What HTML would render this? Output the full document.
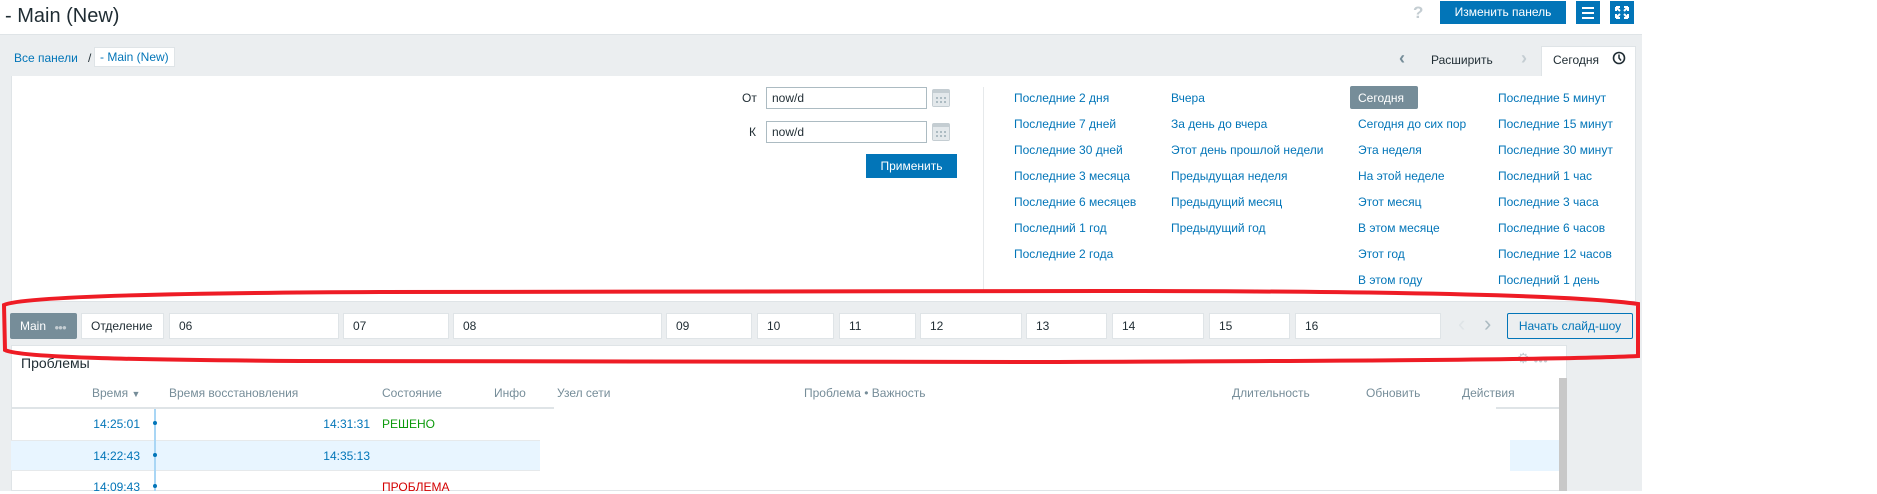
<!DOCTYPE html>
<html><head><meta charset="utf-8"><style>
*{margin:0;padding:0;box-sizing:border-box}
body{width:1877px;height:491px;overflow:hidden;background:#fff;font-family:"Liberation Sans",Arial,sans-serif;font-size:12px;color:#1f2c33;position:relative}
.a{position:absolute;white-space:nowrap}
.l{color:#0275b8}
.tab{position:absolute;top:313px;height:26px;background:#fff;border:1px solid #dfe4e7;line-height:24px;padding-left:9px;color:#1f2c33;overflow:hidden}
.h{color:#768d99}
</style></head><body>
<div class="a" style="left:5px;top:3px;font-size:20px;line-height:26px;color:#1f2c33">- Main (New)</div>
<div class="a" style="left:1413px;top:3px;font-size:17px;color:#c4cdd2;font-weight:bold">?</div>
<div class="a" style="left:1440px;top:1px;width:126px;height:23px;background:#0275b8;color:#fff;text-align:center;line-height:23px">Изменить панель</div>
<div class="a" style="left:1576px;top:1px;width:24px;height:23px;background:#0275b8">
<div style="position:absolute;left:6px;top:6px;width:12px;height:2px;background:#fff"></div>
<div style="position:absolute;left:6px;top:11px;width:12px;height:2px;background:#fff"></div>
<div style="position:absolute;left:6px;top:16px;width:12px;height:2px;background:#fff"></div></div>
<div class="a" style="left:1610px;top:1px;width:24px;height:23px;background:#0275b8">
<svg width="24" height="23" viewBox="0 0 24 23"><path d="M6 6h4M6 6v4M18 6h-4M18 6v4M6 17h4M6 17v-4M18 17h-4M18 17v-4M7 7l3 3M17 7l-3 3M7 16l3-3M17 16l-3-3" stroke="#fff" stroke-width="2" fill="none"/></svg></div>
<div class="a" style="left:0;top:34px;width:1642px;height:457px;background:#ebeef0;border-top:1px solid #dfe4e7"></div>
<div class="a l" style="left:14px;top:50px;line-height:16px">Все панели</div>
<div class="a" style="left:88px;top:50px;line-height:16px;color:#1f2c33">/</div>
<div class="a l" style="left:94px;top:47px;width:81px;height:20px;background:#fff;border:1px solid #dfe4e7;line-height:18px;padding-left:5px">- Main (New)</div>
<div class="a" style="left:1399px;top:48px;font-size:18px;color:#768d99;font-weight:bold">&#8249;</div>
<div class="a" style="left:1431px;top:53px;color:#1f2c33">Расширить</div>
<div class="a" style="left:1521px;top:48px;font-size:18px;color:#c4cdd2;font-weight:bold">&#8250;</div>
<div class="a" style="left:1541px;top:46px;width:95px;height:31px;background:#fff;border:1px solid #dfe4e7;border-bottom:none"></div>
<div class="a" style="left:1553px;top:53px">Сегодня</div>
<svg class="a" style="left:1612px;top:51px" width="14" height="14" viewBox="0 0 14 14"><circle cx="7" cy="7" r="5.5" stroke="#1f2c33" stroke-width="1.6" fill="none"/><path d="M7 3.5V7l2 2.5" stroke="#1f2c33" stroke-width="1.5" fill="none"/></svg>
<div class="a" style="left:11px;top:76px;width:1625px;height:226px;background:#fff;border:1px solid #dfe4e7;border-top:none"></div>
<div class="a" style="left:742px;top:91px">От</div>
<div class="a" style="left:766px;top:87px;width:161px;height:22px;border:1px solid #acbbc2;padding-left:5px;line-height:20px">now/d</div>
<div class="a" style="left:749px;top:125px">К</div>
<div class="a" style="left:766px;top:121px;width:161px;height:22px;border:1px solid #acbbc2;padding-left:5px;line-height:20px">now/d</div>
<svg class="a" style="left:932px;top:89px" width="18" height="18"><rect width="18" height="18" rx="2" fill="#c4cdd2"/><rect x="1" y="4" width="16" height="13" fill="#e3e8eb"/><g fill="#acbbc2"><rect x="4" y="8" width="2" height="2"/><rect x="8" y="8" width="2" height="2"/><rect x="12" y="8" width="2" height="2"/><rect x="4" y="12" width="2" height="2"/><rect x="8" y="12" width="2" height="2"/><rect x="12" y="12" width="2" height="2"/></g></svg>
<svg class="a" style="left:932px;top:123px" width="18" height="18"><rect width="18" height="18" rx="2" fill="#c4cdd2"/><rect x="1" y="4" width="16" height="13" fill="#e3e8eb"/><g fill="#acbbc2"><rect x="4" y="8" width="2" height="2"/><rect x="8" y="8" width="2" height="2"/><rect x="12" y="8" width="2" height="2"/><rect x="4" y="12" width="2" height="2"/><rect x="8" y="12" width="2" height="2"/><rect x="12" y="12" width="2" height="2"/></g></svg>
<div class="a" style="left:866px;top:154px;width:91px;height:24px;background:#0275b8;color:#fff;text-align:center;line-height:24px">Применить</div>
<div class="a" style="left:983px;top:87px;width:1px;height:205px;background:#e6e9eb"></div>
<div class="a l" style="left:1014px;top:85px;line-height:26px;white-space:pre">Последние 2 дня
Последние 7 дней
Последние 30 дней
Последние 3 месяца
Последние 6 месяцев
Последний 1 год
Последние 2 года</div>
<div class="a l" style="left:1171px;top:85px;line-height:26px;white-space:pre">Вчера
За день до вчера
Этот день прошлой недели
Предыдущая неделя
Предыдущий месяц
Предыдущий год</div>
<div class="a" style="left:1350px;top:86px;width:68px;height:23px;background:#768d99;border-radius:2px"></div>
<div class="a l" style="left:1358px;top:85px;line-height:26px;white-space:pre"><span style="color:#fff">Сегодня</span>
Сегодня до сих пор
Эта неделя
На этой неделе
Этот месяц
В этом месяце
Этот год
В этом году</div>
<div class="a l" style="left:1498px;top:85px;line-height:26px;white-space:pre">Последние 5 минут
Последние 15 минут
Последние 30 минут
Последний 1 час
Последние 3 часа
Последние 6 часов
Последние 12 часов
Последний 1 день</div>
<div class="a" style="left:10px;top:313px;width:67px;height:26px;background:#768d99;border-radius:2px;color:#fff;line-height:26px;padding-left:10px">Main <span style="color:#c4cdd2;font-size:8px;margin-left:5px;letter-spacing:-1px">●●●</span></div>
<div class="tab" style="left:81px;width:83px">Отделение</div>
<div class="tab" style="left:169px;width:170px">06</div>
<div class="tab" style="left:343px;width:106px">07</div>
<div class="tab" style="left:453px;width:209px">08</div>
<div class="tab" style="left:666px;width:86px">09</div>
<div class="tab" style="left:757px;width:77px">10</div>
<div class="tab" style="left:839px;width:77px">11</div>
<div class="tab" style="left:920px;width:102px">12</div>
<div class="tab" style="left:1026px;width:81px">13</div>
<div class="tab" style="left:1112px;width:92px">14</div>
<div class="tab" style="left:1209px;width:81px">15</div>
<div class="tab" style="left:1295px;width:146px">16</div>
<div class="a" style="left:1458px;top:311px;font-size:22px;color:#dfe4e7">&#8249;</div>
<div class="a" style="left:1484px;top:311px;font-size:22px;color:#acbbc2">&#8250;</div>
<div class="a" style="left:1507px;top:313px;width:126px;height:26px;border:1px solid #0275b8;border-radius:2px;color:#0275b8;text-align:center;line-height:24px;background:#ebeef0">Начать слайд-шоу</div>
<div class="a" style="left:11px;top:345px;width:1556px;height:146px;background:#fff;border:1px solid #dfe4e7"></div>
<div class="a" style="left:21px;top:355px;font-size:14px;color:#1f2c33">Проблемы</div>
<div class="a" style="left:1517px;top:350px;color:#c4cdd2;font-size:14px">⚙ <span style="font-size:8px">●●●</span></div>
<div class="a" style="left:1559px;top:378px;width:8px;height:113px;background:#c8c8c8"></div>
<div class="a h" style="left:92px;top:386px">Время <span style="font-size:9px">▼</span></div>
<div class="a h" style="left:169px;top:386px">Время восстановления</div>
<div class="a h" style="left:382px;top:386px">Состояние</div>
<div class="a h" style="left:494px;top:386px">Инфо</div>
<div class="a h" style="left:557px;top:386px">Узел сети</div>
<div class="a h" style="left:804px;top:386px">Проблема • Важность</div>
<div class="a h" style="left:1232px;top:386px">Длительность</div>
<div class="a h" style="left:1366px;top:386px">Обновить</div>
<div class="a h" style="left:1462px;top:386px">Действия</div>
<div class="a" style="left:11px;top:407px;width:543px;height:2px;background:#dfe4e7"></div>
<div class="a" style="left:1496px;top:407px;width:63px;height:2px;background:#dfe4e7"></div>
<div class="a" style="left:11px;top:440px;width:529px;height:31px;background:#e8f5ff;border-top:1px solid #e6e9eb;border-bottom:1px solid #e6e9eb"></div>
<div class="a" style="left:1510px;top:440px;width:49px;height:31px;background:#e8f5ff"></div>
<div class="a" style="left:154px;top:409px;width:2px;height:82px;background:#a9d6f5"></div>
<div class="a" style="left:153px;top:421px;width:4px;height:4px;border-radius:2px;background:#0275b8"></div>
<div class="a" style="left:153px;top:453px;width:4px;height:4px;border-radius:2px;background:#0275b8"></div>
<div class="a" style="left:153px;top:484px;width:4px;height:4px;border-radius:2px;background:#0275b8"></div>
<div class="a l" style="left:80px;top:417px;width:60px;text-align:right">14:25:01</div>
<div class="a l" style="left:300px;top:417px;width:70px;text-align:right">14:31:31</div>
<div class="a" style="left:382px;top:417px;color:#0b9a0b">РЕШЕНО</div>
<div class="a l" style="left:80px;top:449px;width:60px;text-align:right">14:22:43</div>
<div class="a l" style="left:300px;top:449px;width:70px;text-align:right">14:35:13</div>
<div class="a l" style="left:80px;top:480px;width:60px;text-align:right">14:09:43</div>
<div class="a" style="left:382px;top:480px;color:#d40000">ПРОБЛЕМА</div>
<svg class="a" style="left:0;top:0" width="1877" height="491"><path d="M380 292 L1100 291 C1300 291 1560 293 1638 304 L1638 356 C1560 360 1300 361 1050 362 L300 361 C150 360 20 358 5 350 L4 305 C20 297 150 293 380 292 Z" stroke="#ee1c25" stroke-width="4" fill="none"/></svg>
</body></html>
